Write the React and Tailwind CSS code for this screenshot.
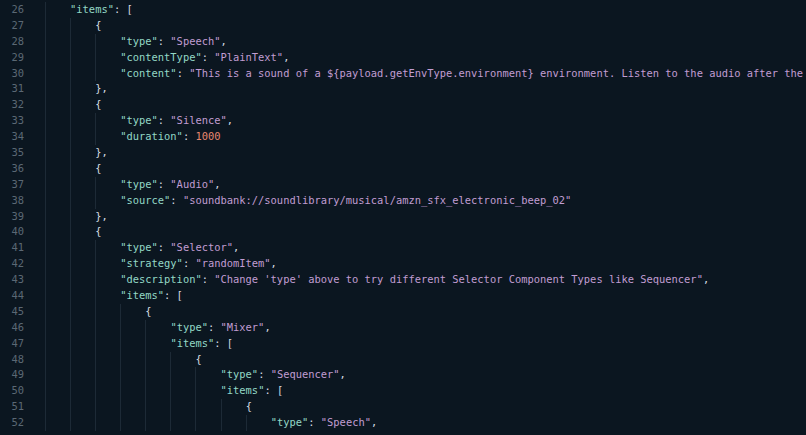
const lines = [
  { n: 26, lvl: 1, t: [["k", '"items"'], ["p", ": ["]] },
  { n: 27, lvl: 2, t: [["p", "{"]] },
  { n: 28, lvl: 3, t: [["k", '"type"'], ["p", ": "], ["s", '"Speech"'], ["p", ","]] },
  { n: 29, lvl: 3, t: [["k", '"contentType"'], ["p", ": "], ["s", '"PlainText"'], ["p", ","]] },
  {
    n: 30,
    lvl: 3,
    t: [
      ["k", '"content"'],
      ["p", ": "],
      ["s", '"This is a sound of a ${payload.getEnvType.environment} environment. Listen to the audio after the'],
    ],
  },
  { n: 31, lvl: 2, t: [["p", "},"]] },
  { n: 32, lvl: 2, t: [["p", "{"]] },
  { n: 33, lvl: 3, t: [["k", '"type"'], ["p", ": "], ["s", '"Silence"'], ["p", ","]] },
  { n: 34, lvl: 3, t: [["k", '"duration"'], ["p", ": "], ["n", "1000"]] },
  { n: 35, lvl: 2, t: [["p", "},"]] },
  { n: 36, lvl: 2, t: [["p", "{"]] },
  { n: 37, lvl: 3, t: [["k", '"type"'], ["p", ": "], ["s", '"Audio"'], ["p", ","]] },
  {
    n: 38,
    lvl: 3,
    t: [["k", '"source"'], ["p", ": "], ["s", '"soundbank://soundlibrary/musical/amzn_sfx_electronic_beep_02"']],
  },
  { n: 39, lvl: 2, t: [["p", "},"]] },
  { n: 40, lvl: 2, t: [["p", "{"]] },
  { n: 41, lvl: 3, t: [["k", '"type"'], ["p", ": "], ["s", '"Selector"'], ["p", ","]] },
  { n: 42, lvl: 3, t: [["k", '"strategy"'], ["p", ": "], ["s", '"randomItem"'], ["p", ","]] },
  {
    n: 43,
    lvl: 3,
    t: [
      ["k", '"description"'],
      ["p", ": "],
      ["s", "\"Change 'type' above to try different Selector Component Types like Sequencer\""],
      ["p", ","],
    ],
  },
  { n: 44, lvl: 3, t: [["k", '"items"'], ["p", ": ["]] },
  { n: 45, lvl: 4, t: [["p", "{"]] },
  { n: 46, lvl: 5, t: [["k", '"type"'], ["p", ": "], ["s", '"Mixer"'], ["p", ","]] },
  { n: 47, lvl: 5, t: [["k", '"items"'], ["p", ": ["]] },
  { n: 48, lvl: 6, t: [["p", "{"]] },
  { n: 49, lvl: 7, t: [["k", '"type"'], ["p", ": "], ["s", '"Sequencer"'], ["p", ","]] },
  { n: 50, lvl: 7, t: [["k", '"items"'], ["p", ": ["]] },
  { n: 51, lvl: 8, t: [["p", "{"]] },
  { n: 52, lvl: 9, t: [["k", '"type"'], ["p", ": "], ["s", '"Speech"'], ["p", ","]] },
];

const tone = {
  k: "text-[#93d8c6]",
  s: "text-[#c19dd2]",
  n: "text-[#e6866f]",
  p: "text-[#d6dce1]",
};

function Line({ line }) {
  return (
    <div className="flex h-[15.9px] items-stretch">
      <div className="w-[24px] shrink-0 text-right text-[#5b6874]">{line.n}</div>
      <div className="w-[21px] shrink-0" />
      {/* indent guides */}
      {Array.from({ length: line.lvl }).map((_, i) => (
        <span key={i} className="w-[25.08px] shrink-0 border-l border-[#1d2a36]" />
      ))}
      <span className="whitespace-pre">
        {line.t.map(([c, txt], i) => (
          <span key={i} className={tone[c]}>
            {txt}
          </span>
        ))}
      </span>
    </div>
  );
}

export default function App() {
  return (
    <div
      className="w-[806px] h-[435px] overflow-hidden bg-[#0b1620] pt-[2px] text-[10.42px] leading-[15.9px]"
      style={{ fontFamily: '"DejaVu Sans Mono", "Liberation Mono", monospace' }}
    >
      {lines.map((l) => (
        <Line key={l.n} line={l} />
      ))}
    </div>
  );
}
